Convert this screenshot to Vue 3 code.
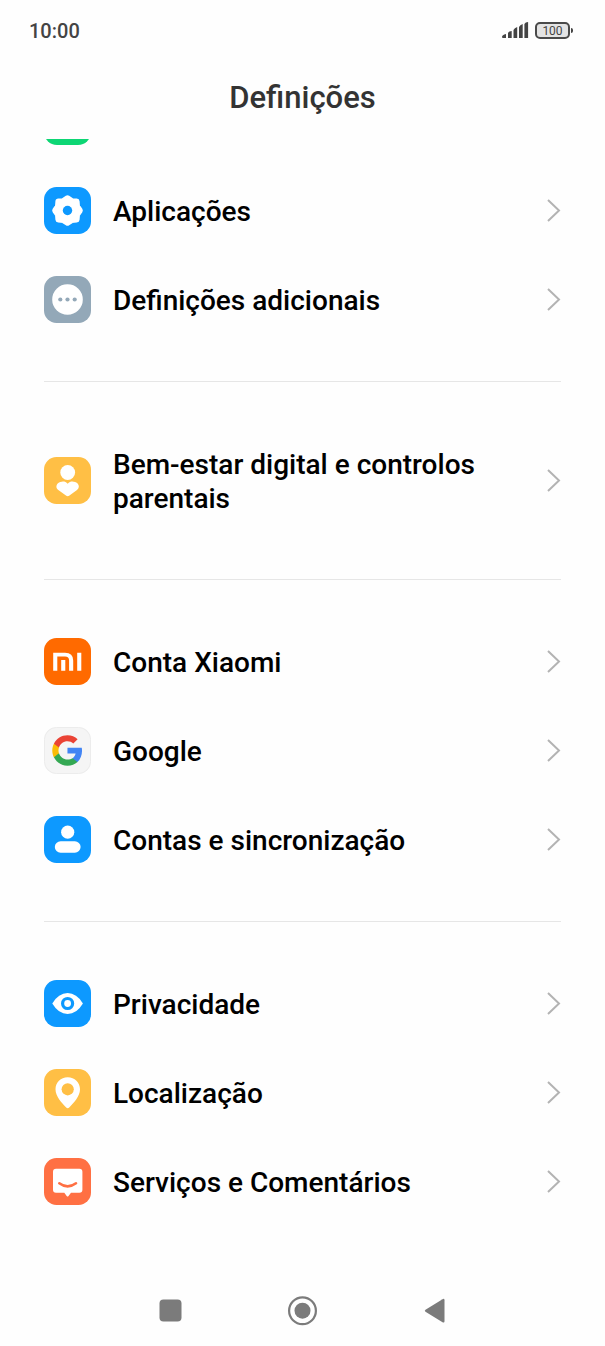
<script setup>
const groups = [
  [
    { icon: 'apps', label: 'Aplicações', color: '#0d99ff' },
    { icon: 'more', label: 'Definições adicionais', color: '#93a8b8' },
  ],
  [{ icon: 'wellbeing', label: 'Bem-estar digital e controlos parentais', color: '#ffbf45', tall: true }],
  [
    { icon: 'mi', label: 'Conta Xiaomi', color: '#ff6a00' },
    { icon: 'google', label: 'Google', color: '#f5f5f5' },
    { icon: 'accounts', label: 'Contas e sincronização', color: '#0d99ff' },
  ],
  [
    { icon: 'privacy', label: 'Privacidade', color: '#0d99ff' },
    { icon: 'location', label: 'Localização', color: '#ffbf45' },
    { icon: 'feedback', label: 'Serviços e Comentários', color: '#ff7043' },
  ],
]
</script>

<template>
  <div class="screen">
    <header>
      <div class="status">
        <time>10:00</time>
        <div class="indicators">
          <svg class="signal" viewBox="0 0 27 17" aria-hidden="true">
            <path d="M0 15q0-2 4-3v4H1q-1 0-1-1M6 11q1-2 3.700-2v7H6zM11.500 8q1-2 3.700-3v11h-3.700zM17 5q1-2 3.700-3v14h-3.700zM22.400 2q1-2 3.700-2v16h-3.700z" />
          </svg>
          <span class="battery">100</span>
        </div>
      </div>
      <h1>Definições</h1>
    </header>

    <main>
      <div class="list">
        <div class="row"><span class="clipped-icon"></span></div>
        <section v-for="(group, i) in groups" :key="i" class="group">
          <a v-for="item in group" :key="item.icon" href="#" class="row" :class="{ tall: item.tall }">
            <svg class="icon" viewBox="0 0 47 47" aria-hidden="true">
              <rect width="47" height="47" rx="12.500" :fill="item.color" />
              <g v-if="item.icon === 'apps'">
                <path
                  d="M23.500 11.200 27.900 14.200 32.600 14.400 33 19.300 35.800 23.500 33 27.700 32.600 32.600 27.900 32.900 23.500 35.800 19.100 32.900 14.400 32.600 14 27.700 11.200 23.500 14 19.300 14.400 14.400 19.100 14.200Z"
                  fill="#fff" stroke="#fff" stroke-width="6" stroke-linejoin="round" />
                <circle cx="23.500" cy="23.500" r="4.700" :fill="item.color" />
              </g>
              <g v-else-if="item.icon === 'more'">
                <circle cx="23.500" cy="23.500" r="15.300" fill="#fff" />
                <g :fill="item.color">
                  <circle cx="16.300" cy="23.500" r="2.100" />
                  <circle cx="23.500" cy="23.500" r="2.100" />
                  <circle cx="30.700" cy="23.500" r="2.100" />
                </g>
              </g>
              <g v-else-if="item.icon === 'wellbeing'" fill="#fff">
                <circle cx="23.700" cy="15.500" r="7.400" />
                <path d="M23.700 26.700C21 23.500 16.500 24.300 14 26.300 11.700 28.500 12 31.300 14.300 33.100L22.300 38.700Q23.700 39.600 25.100 38.700L33 33.100C35.300 31.300 35.500 28.500 33.400 26.300 30.800 24.300 26.400 23.500 23.700 26.700Z" />
              </g>
              <g v-else-if="item.icon === 'mi'" fill="#fff">
                <path d="M9.200 14.700H21Q29.200 14.700 29.200 22.500V32.800H25.100V22.500Q25.100 18.500 21 18.500H13.300V32.800H9.200Z" />
                <path d="M17.200 22h4.100v10.800h-4.100zM33.200 14.700h4.100v18.100h-4.100z" />
              </g>
              <g v-else-if="item.icon === 'google'">
                <rect x="0.500" y="0.500" width="46" height="46" rx="12" fill="none" stroke="#ececec" />
                <g transform="translate(6.900 6.900) scale(1.380)">
                  <path fill="#4285f4" d="M22.560 12.250c0-.780-.070-1.530-.200-2.250H12v4.260h5.920c-.260 1.370-1.040 2.530-2.210 3.310v2.770h3.570c2.080-1.920 3.280-4.740 3.280-8.090z" />
                  <path fill="#34a853" d="M12 23c2.970 0 5.460-.980 7.280-2.660l-3.570-2.770c-.980.660-2.230 1.060-3.710 1.060-2.860 0-5.290-1.930-6.160-4.530H2.180v2.840C3.990 20.530 7.700 23 12 23z" />
                  <path fill="#fbbc05" d="M5.840 14.090c-.220-.660-.350-1.360-.350-2.090s.130-1.430.350-2.090V7.070H2.180C1.430 8.550 1 10.220 1 12s.430 3.450 1.180 4.930l3.660-2.840z" />
                  <path fill="#ea4335" d="M12 5.380c1.620 0 3.060.560 4.210 1.640l3.150-3.150C17.450 2.090 14.970 1 12 1 7.700 1 3.990 3.470 2.180 7.070l3.660 2.840c.870-2.600 3.300-4.530 6.160-4.530z" />
                </g>
              </g>
              <g v-else-if="item.icon === 'accounts'" fill="#fff">
                <circle cx="23.700" cy="16.200" r="6.600" />
                <rect x="10.800" y="25.200" width="25.800" height="11.600" rx="5.800" />
              </g>
              <g v-else-if="item.icon === 'privacy'">
                <path d="M8.300 23.500Q14.500 13 23.600 13T38.900 23.500Q32.700 34 23.600 34T8.300 23.500Z" fill="#fff" />
                <circle cx="23.600" cy="23.500" r="5" fill="none" :stroke="item.color" stroke-width="3.200" />
              </g>
              <g v-else-if="item.icon === 'location'">
                <path d="M23.700 8.300C16.700 8.300 11.500 13.700 11.500 20.300 11.500 27.500 18 34 22.200 38.600Q23.700 40 25.200 38.600C29.400 34 36 27.500 36 20.300 36 13.700 30.700 8.300 23.700 8.300Z" fill="#fff" />
                <circle cx="23.700" cy="20.300" r="6.100" :fill="item.color" />
              </g>
              <g v-else>
                <path d="M12 10.800H35.400Q38.400 10.800 38.400 13.800V31.800Q38.400 34.800 35.400 34.800H27L24.500 38Q23.600 39 22.700 38L20.300 34.800H12Q9 34.800 9 31.800V13.800Q9 10.800 12 10.800Z" fill="#fff" />
                <path d="M15.300 25.300Q23.600 31.500 32 25.300" fill="none" :stroke="item.color" stroke-width="2.600" stroke-linecap="round" />
              </g>
            </svg>
            <span class="label">{{ item.label }}</span>
            <svg class="chevron" viewBox="0 0 14 24" aria-hidden="true">
              <path d="M1 1 12 11.500 1 22" />
            </svg>
          </a>
        </section>
      </div>
    </main>

    <nav>
      <button type="button" aria-label="Recentes">
        <svg viewBox="0 0 32 32"><rect x="4.500" y="4.500" width="22" height="22" rx="4" /></svg>
      </button>
      <button type="button" aria-label="Início">
        <svg viewBox="0 0 32 32">
          <circle cx="15.500" cy="15.700" r="13.400" fill="none" stroke="#7b7b7b" stroke-width="2.200" />
          <circle cx="15.500" cy="15.700" r="8" />
        </svg>
      </button>
      <button type="button" aria-label="Voltar">
        <svg viewBox="0 0 32 32">
          <path d="M6.500 14.700 23.500 4.200Q25.500 3.200 25.500 5.200V26.200Q25.500 28.200 23.500 27.200L6.500 16.700Q5 15.700 6.500 14.700Z" />
        </svg>
      </button>
    </nav>
  </div>
</template>

<style>
body {
  margin: 0;
  background: #fefefe;
}
</style>

<style scoped>
.screen {
  display: flex;
  flex-direction: column;
  min-height: 100vh;
  font-family: Roboto, "Noto Sans", sans-serif;
  color: #000;
}

.status {
  display: flex;
  justify-content: space-between;
  align-items: center;
  height: 60px;
  padding: 0 35px 0 29px;
  color: #444;
}

time {
  padding-top: 2px;
  font-size: 20px;
  font-weight: 500;
  line-height: 24px;
}

.indicators {
  display: flex;
  align-items: center;
  gap: 6px;
}

.signal {
  width: 27px;
  height: 17px;
  fill: #444;
}

.battery {
  position: relative;
  box-sizing: border-box;
  width: 35px;
  height: 17px;
  border: 2px solid #4a4a4a;
  border-radius: 5px;
  background: #e4e4e4;
  font-size: 12px;
  line-height: 14px;
  text-align: center;
}

.battery::after {
  content: "";
  position: absolute;
  top: 4px;
  right: -5px;
  width: 2px;
  height: 5px;
  border-radius: 0 2px 2px 0;
  background: #444;
}

h1 {
  margin: 0;
  padding: 19px 0 22px;
  color: #333;
  font-size: 31px;
  font-weight: 500;
  line-height: 38px;
  text-align: center;
}

main {
  flex: 1;
  overflow: hidden;
}

.list {
  margin-top: -62px;
  padding: 0 44px;
}

.row {
  display: flex;
  align-items: center;
  gap: 22px;
  min-height: 89px;
  color: inherit;
  text-decoration: none;
}

.row.tall {
  min-height: 123px;
}

.group + .group {
  margin-top: 37px;
  padding-top: 37px;
  border-top: 1px solid #e6e6e6;
}

.icon,
.clipped-icon {
  flex: none;
  width: 47px;
  height: 47px;
}

.clipped-icon {
  border-radius: 13px;
  background: #0dd674;
}

.label {
  flex: 1;
  padding-top: 3px;
  font-size: 28px;
  font-weight: 500;
  line-height: 34px;
}

.chevron {
  flex: none;
  width: 14px;
  height: 24px;
  fill: none;
  stroke: #b3b3b3;
  stroke-width: 2;
}

nav {
  display: flex;
  justify-content: center;
  align-items: center;
  gap: 88px;
  height: 70px;
}

button {
  display: grid;
  place-items: center;
  width: 44px;
  height: 44px;
  padding: 0;
  border: 0;
  background: none;
}

button svg {
  width: 32px;
  height: 32px;
  fill: #7b7b7b;
}
</style>
